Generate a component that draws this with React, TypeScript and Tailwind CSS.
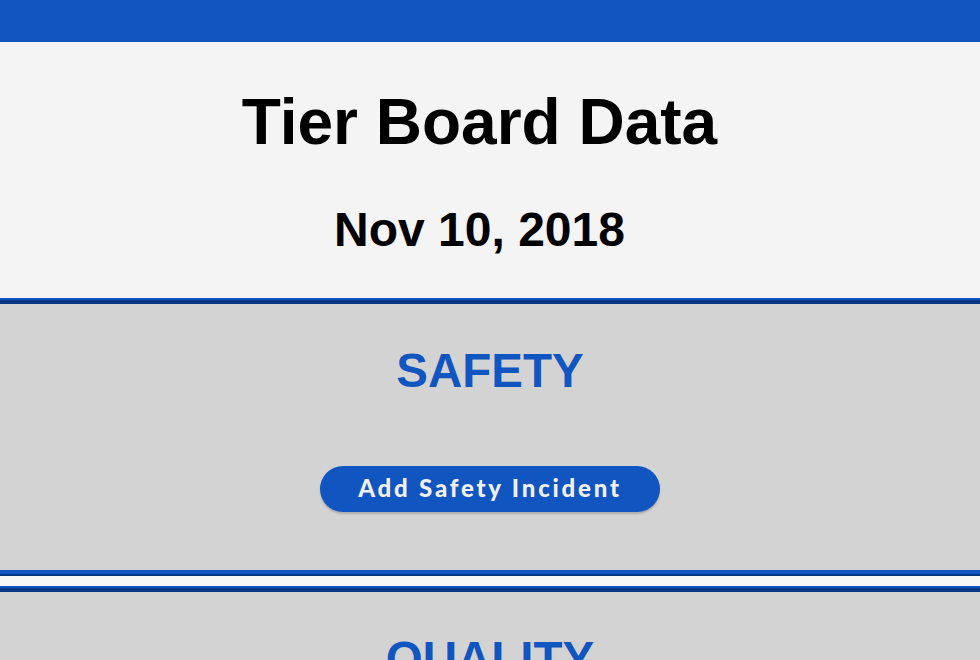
import React from "react";

export default function App() {
  return (
    <div className="w-[980px] h-[660px] overflow-hidden bg-[#d3d3d3]" style={{ fontFamily: '"Liberation Sans", Arial, sans-serif' }}>
      <div className="h-[42px] bg-[#1055c0]" />
      <div className="bg-[#f4f4f4] h-[256px] pt-[48px] pr-[21px] flex flex-col items-center">
        <h1 className="text-[64px] leading-none font-bold text-black">Tier Board Data</h1>
        <div className="mt-[52px] text-[48px] leading-none font-bold text-black">Nov 10, 2018</div>
      </div>
      <div className="h-[2px] bg-[#1055c0]" />
      <div className="h-[4px] bg-[#073684]" />
      <section className="h-[266px] pt-[43px] flex flex-col items-center">
        <h2 className="text-[47.5px] leading-none font-bold text-[#1055c0]">SAFETY</h2>
        <button
          className="mt-[71.5px] w-[340px] h-[46px] pb-[2px] rounded-full bg-[#1055c0] text-[#f0f0f0] text-[24px] font-black tracking-[2.8px] shadow-[0_2px_2px_rgba(0,0,0,0.18)] flex items-center justify-center"
          style={{ fontFamily: 'Lato, "Open Sans", sans-serif' }}
        >
          Add Safety Incident
        </button>
      </section>
      <div className="h-[4px] bg-[#1055c0]" />
      <div className="h-[2px] bg-[#073684]" />
      <div className="h-[10px] bg-[#f7f7f7]" />
      <div className="h-[2px] bg-[#1055c0]" />
      <div className="h-[4px] bg-[#073684]" />
      <section className="pt-[43px] flex flex-col items-center">
        <h2 className="text-[47.5px] leading-none font-bold text-[#1055c0]">QUALITY</h2>
      </section>
    </div>
  );
}
